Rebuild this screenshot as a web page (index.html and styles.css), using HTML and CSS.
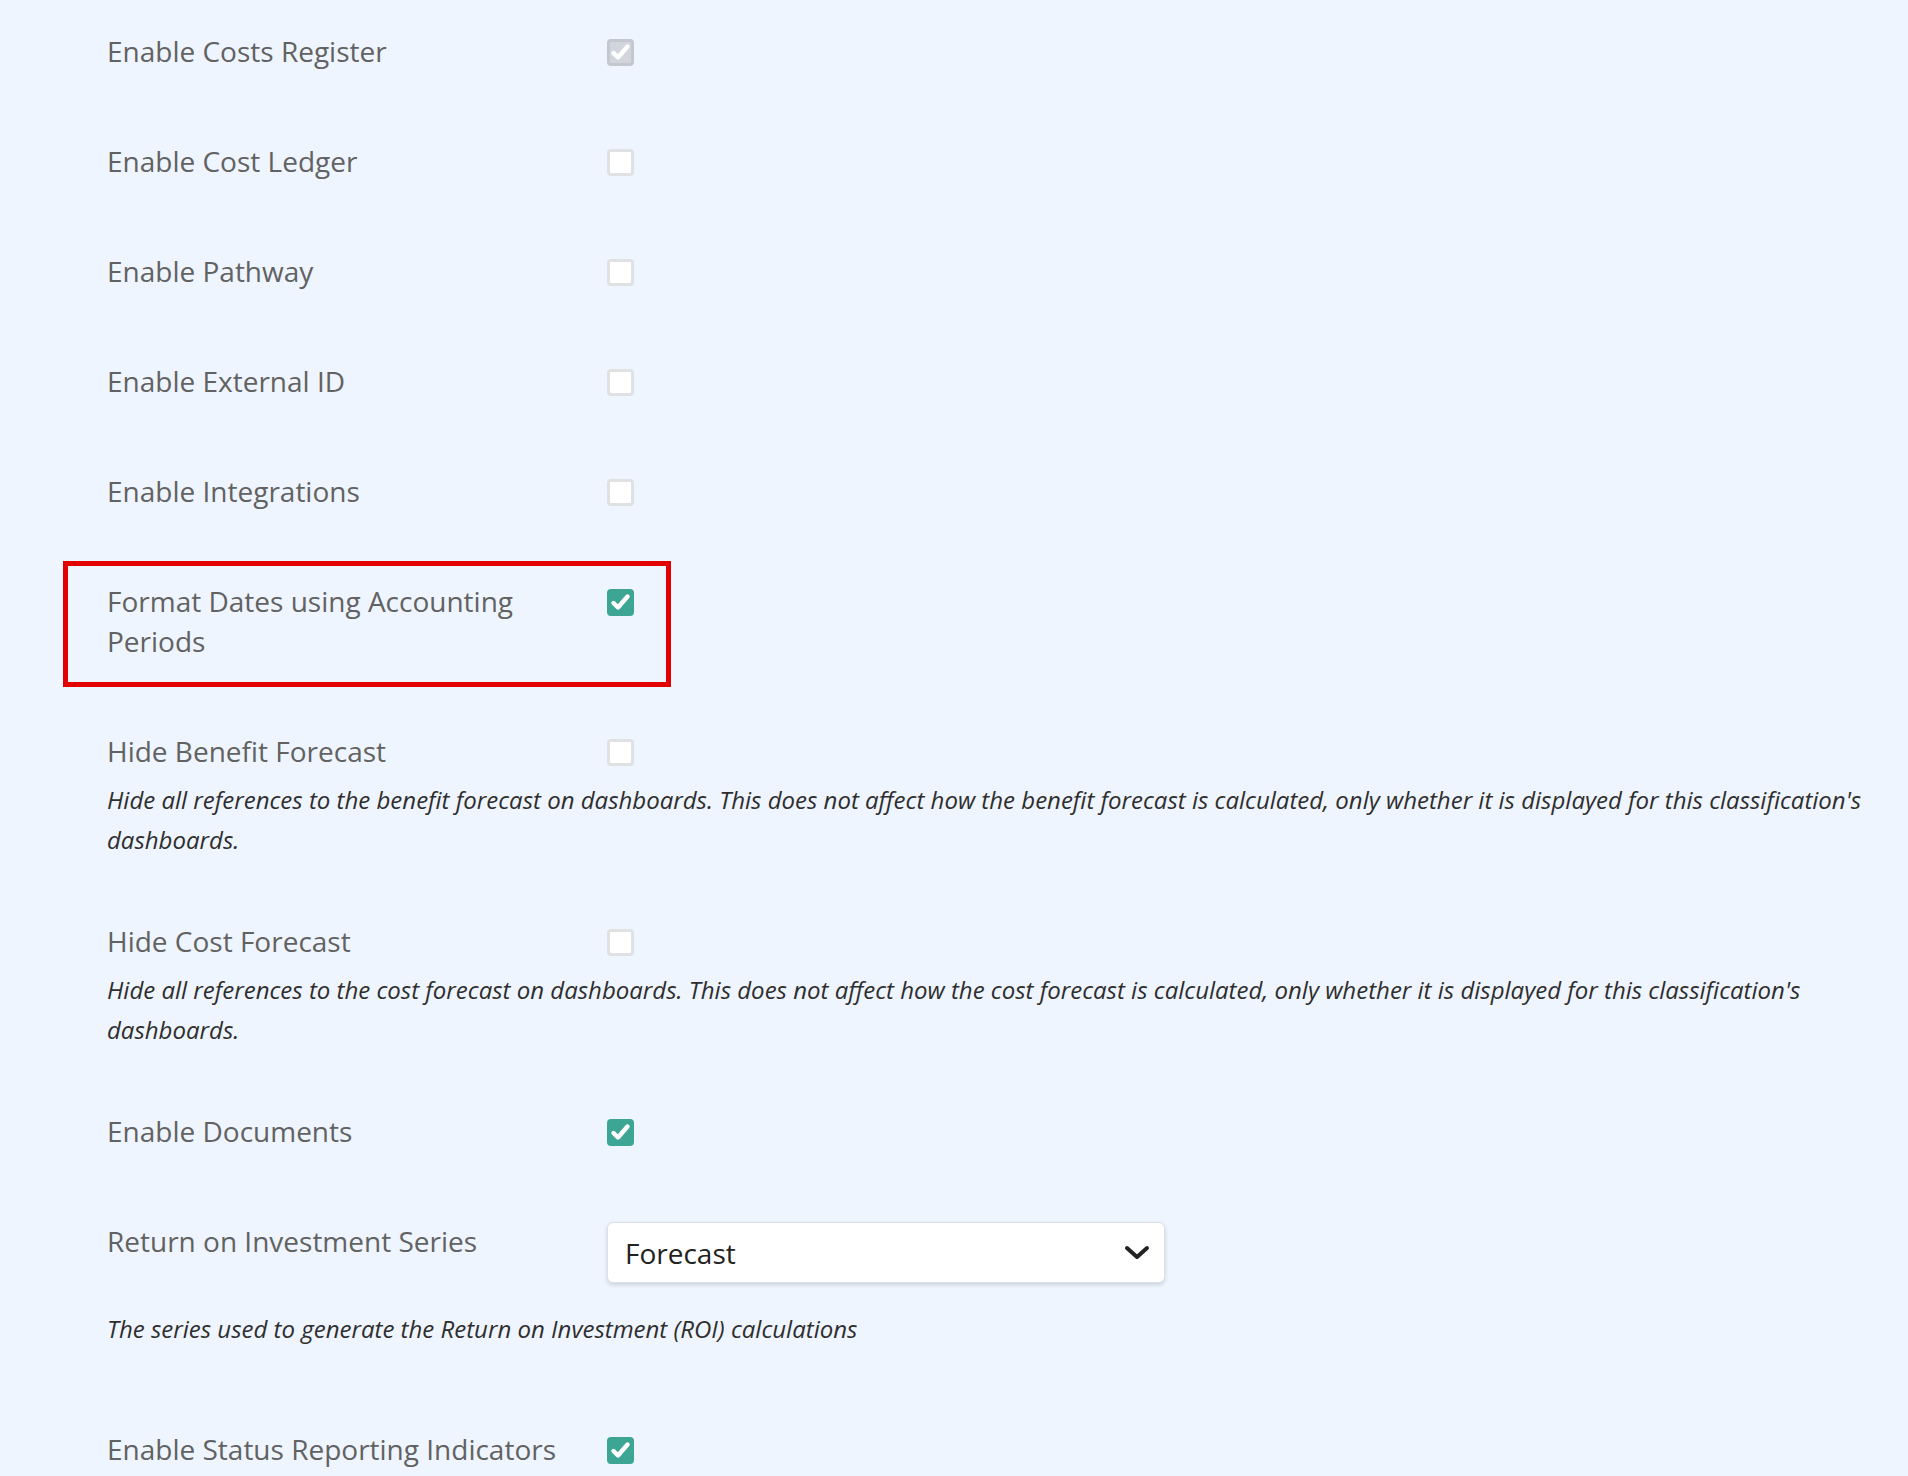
FILE: index.html
```html
<!DOCTYPE html>
<html lang="en">
<head>
    <meta charset="UTF-8">
    <meta name="viewport" content="width=device-width, initial-scale=1.0">
    <title>Classification Settings</title>
    <link rel="stylesheet" href="styles.css">
</head>
<body>
    <div class="settings">
        <div class="field">
            <div class="field-row">
                <label class="field-label">Enable Costs Register</label>
                <div class="field-control">
                    <span class="check is-disabled"><svg viewBox="0 0 27 27"><path d="M6.5 14 L11 18.5 L20.5 7.5"/></svg></span>
                </div>
            </div>
        </div>

        <div class="field">
            <div class="field-row">
                <label class="field-label">Enable Cost Ledger</label>
                <div class="field-control"><span class="check"></span></div>
            </div>
        </div>

        <div class="field">
            <div class="field-row">
                <label class="field-label">Enable Pathway</label>
                <div class="field-control"><span class="check"></span></div>
            </div>
        </div>

        <div class="field">
            <div class="field-row">
                <label class="field-label">Enable External ID</label>
                <div class="field-control"><span class="check"></span></div>
            </div>
        </div>

        <div class="field">
            <div class="field-row">
                <label class="field-label">Enable Integrations</label>
                <div class="field-control"><span class="check"></span></div>
            </div>
        </div>

        <div class="field field-highlight">
            <div class="field-row">
                <label class="field-label">Format Dates using Accounting Periods</label>
                <div class="field-control">
                    <span class="check is-checked"><svg viewBox="0 0 27 27"><path d="M6.5 14 L11 18.5 L20.5 7.5"/></svg></span>
                </div>
            </div>
        </div>

        <div class="field">
            <div class="field-row">
                <label class="field-label">Hide Benefit Forecast</label>
                <div class="field-control"><span class="check"></span></div>
            </div>
            <p class="help">Hide all references to the benefit forecast on dashboards. This does not affect how the benefit forecast is calculated, only whether it is displayed for this classification's dashboards.</p>
        </div>

        <div class="field">
            <div class="field-row">
                <label class="field-label">Hide Cost Forecast</label>
                <div class="field-control"><span class="check"></span></div>
            </div>
            <p class="help">Hide all references to the cost forecast on dashboards. This does not affect how the cost forecast is calculated, only whether it is displayed for this classification's dashboards.</p>
        </div>

        <div class="field">
            <div class="field-row">
                <label class="field-label">Enable Documents</label>
                <div class="field-control">
                    <span class="check is-checked"><svg viewBox="0 0 27 27"><path d="M6.5 14 L11 18.5 L20.5 7.5"/></svg></span>
                </div>
            </div>
        </div>

        <div class="field">
            <div class="field-row">
                <label class="field-label">Return on Investment Series</label>
                <div class="field-control">
                    <div class="select">
                        <span>Forecast</span>
                        <svg class="chevron" viewBox="0 0 26 16"><path d="M3 3 L13 12 L23 3"/></svg>
                    </div>
                </div>
            </div>
            <p class="help help-select">The series used to generate the Return on Investment (ROI) calculations</p>
        </div>

        <div class="field">
            <div class="field-row">
                <label class="field-label">Enable Status Reporting Indicators</label>
                <div class="field-control">
                    <span class="check is-checked"><svg viewBox="0 0 27 27"><path d="M6.5 14 L11 18.5 L20.5 7.5"/></svg></span>
                </div>
            </div>
        </div>
    </div>
</body>
</html>
```

FILE: styles.css
```css
html, body {
    margin: 0;
    background-color: #eef5ff;
}
body {
    font-family: "Open Sans", "Noto Sans", sans-serif;
}
.settings {
    padding: 31px 28px 0 107px;
}
.field {
    position: relative;
    margin-bottom: 70px;
}
.field-row {
    display: flex;
    align-items: flex-start;
}
.field-label {
    width: 500px;
    flex-shrink: 0;
    box-sizing: border-box;
    padding-right: 30px;
    font-size: 28px;
    line-height: 40px;
    color: #626262;
}
.field-control {
    min-height: 40px;
    display: flex;
    align-items: center;
}

/* annotation box drawn round the highlighted setting */
.field-highlight::after {
    content: "";
    position: absolute;
    left: -44px;
    top: -20px;
    width: 598px;
    height: 116px;
    border: 5px solid #e20000;
}

.check {
    width: 27px;
    height: 27px;
    box-sizing: border-box;
    margin-top: 2px;
    border: 3px solid #dfe1e3;
    border-radius: 4px;
    background-color: #fff;
    display: flex;
}
.check svg {
    width: 27px;
    height: 27px;
    margin: -3px;
}
.check path {
    fill: none;
    stroke: #fff;
    stroke-width: 4.4;
    stroke-linecap: round;
    stroke-linejoin: round;
}
.check.is-checked {
    background-color: #3ca594;
    border-color: #3ca594;
}
.check.is-disabled {
    background-color: #d2d6dc;
    border-color: #c3c8cf;
}

.help {
    margin: 9px 0 -9px;
    font-size: 24px;
    line-height: 40px;
    font-style: italic;
    color: #2e2e2e;
}
.help-select {
    margin: 26px 0 80px;
}

.select {
    width: 558px;
    height: 61px;
    box-sizing: border-box;
    margin-top: 1px;
    padding: 0 14px 0 17px;
    background-color: #fff;
    border: 1px solid #dcdfe3;
    border-radius: 6px;
    box-shadow: 0 2px 4px rgba(0, 0, 0, 0.14);
    display: flex;
    align-items: center;
    justify-content: space-between;
    font-size: 28px;
    color: #222;
}
.chevron {
    width: 26px;
    height: 16px;
}
.chevron path {
    fill: none;
    stroke: #222;
    stroke-width: 4;
    stroke-linecap: round;
    stroke-linejoin: round;
}
```
